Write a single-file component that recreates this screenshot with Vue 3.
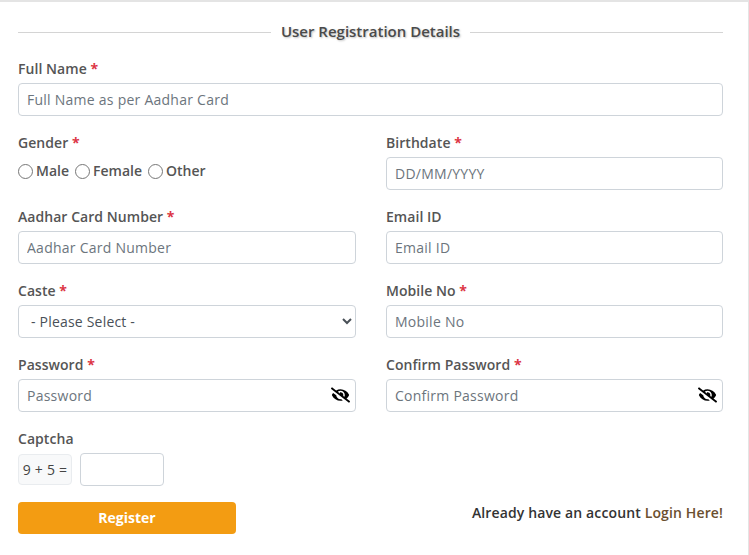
<script setup>
import { ref } from 'vue';

const gender = ref('');
const caste = ref('');
const showPassword = ref(false);
const showConfirm = ref(false);
</script>

<template>
  <div class="page">
    <form class="reg-form" @submit.prevent>
      <div class="legend">
        <span class="legend-line"></span>
        <span class="legend-text">User Registration Details</span>
        <span class="legend-line"></span>
      </div>

      <div class="field">
        <label>Full Name <span class="req">*</span></label>
        <input class="control" type="text" placeholder="Full Name as per Aadhar Card" />
      </div>

      <div class="form-grid">
        <div class="field">
          <label>Gender <span class="req">*</span></label>
          <div class="radio-row">
            <label class="radio"><input v-model="gender" type="radio" value="male" />Male</label>
            <label class="radio"><input v-model="gender" type="radio" value="female" />Female</label>
            <label class="radio"><input v-model="gender" type="radio" value="other" />Other</label>
          </div>
        </div>
        <div class="field">
          <label>Birthdate <span class="req">*</span></label>
          <input class="control" type="text" placeholder="DD/MM/YYYY" />
        </div>

        <div class="field">
          <label>Aadhar Card Number <span class="req">*</span></label>
          <input class="control" type="text" placeholder="Aadhar Card Number" />
        </div>
        <div class="field">
          <label>Email ID</label>
          <input class="control" type="text" placeholder="Email ID" />
        </div>

        <div class="field">
          <label>Caste <span class="req">*</span></label>
          <select v-model="caste" class="control select">
            <option value="">- Please Select -</option>
          </select>
        </div>
        <div class="field">
          <label>Mobile No <span class="req">*</span></label>
          <input class="control" type="text" placeholder="Mobile No" />
        </div>

        <div class="field">
          <label>Password <span class="req">*</span></label>
          <div class="password-wrap">
            <input class="control" :type="showPassword ? 'text' : 'password'" placeholder="Password" />
            <svg class="eye" viewBox="0 0 640 512" @click="showPassword = !showPassword">
              <path d="M320 400c-75.85 0-137.25-58.71-142.9-133.11L72.2 185.82c-13.79 17.3-26.48 35.59-36.72 55.59a32.35 32.35 0 0 0 0 29.19C89.71 376.41 197.07 448 320 448c26.91 0 52.87-4 77.89-10.46L346 397.39a144.13 144.13 0 0 1-26 2.61zm313.82 58.1l-110.55-85.44a331.25 331.25 0 0 0 81.25-102.07 32.35 32.35 0 0 0 0-29.19C550.29 135.59 442.93 64 320 64a308.15 308.15 0 0 0-147.32 37.7L45.46 3.37A16 16 0 0 0 23 6.18L3.37 31.45A16 16 0 0 0 6.18 53.9l588.36 454.73a16 16 0 0 0 22.46-2.81l19.64-25.27a16 16 0 0 0-2.82-22.45zm-183.72-142l-39.3-30.38A94.75 94.75 0 0 0 416 256a94.76 94.76 0 0 0-121.31-92.21A47.65 47.65 0 0 1 304 192a46.64 46.64 0 0 1-1.54 10l-73.61-56.89A142.31 142.31 0 0 1 320 112a143.92 143.92 0 0 1 144 144c0 21.63-5.29 41.79-13.9 60.11z" />
            </svg>
          </div>
        </div>
        <div class="field">
          <label>Confirm Password <span class="req">*</span></label>
          <div class="password-wrap">
            <input class="control" :type="showConfirm ? 'text' : 'password'" placeholder="Confirm Password" />
            <svg class="eye" viewBox="0 0 640 512" @click="showConfirm = !showConfirm">
              <path d="M320 400c-75.85 0-137.25-58.71-142.9-133.11L72.2 185.82c-13.79 17.3-26.48 35.59-36.72 55.59a32.35 32.35 0 0 0 0 29.19C89.71 376.41 197.07 448 320 448c26.91 0 52.87-4 77.89-10.46L346 397.39a144.13 144.13 0 0 1-26 2.61zm313.82 58.1l-110.55-85.44a331.25 331.25 0 0 0 81.25-102.07 32.35 32.35 0 0 0 0-29.19C550.29 135.59 442.93 64 320 64a308.15 308.15 0 0 0-147.32 37.7L45.46 3.37A16 16 0 0 0 23 6.18L3.37 31.45A16 16 0 0 0 6.18 53.9l588.36 454.73a16 16 0 0 0 22.46-2.81l19.64-25.27a16 16 0 0 0-2.82-22.45zm-183.72-142l-39.3-30.38A94.75 94.75 0 0 0 416 256a94.76 94.76 0 0 0-121.31-92.21A47.65 47.65 0 0 1 304 192a46.64 46.64 0 0 1-1.54 10l-73.61-56.89A142.31 142.31 0 0 1 320 112a143.92 143.92 0 0 1 144 144c0 21.63-5.29 41.79-13.9 60.11z" />
            </svg>
          </div>
        </div>
      </div>

      <div class="field captcha-field">
        <label>Captcha</label>
        <div class="captcha-row">
          <span class="captcha-sum">9 + 5 =</span>
          <input class="control captcha-input" type="text" />
        </div>
      </div>

      <div class="form-footer">
        <button class="register-btn" type="submit">Register</button>
        <p class="login-note">Already have an account <a href="#">Login Here!</a></p>
      </div>
    </form>
  </div>
</template>

<style>
html,
body {
  background: #fff;
}
</style>

<style scoped>
.page {
  width: 749px;
  height: 555px;
  box-sizing: border-box;
  overflow: hidden;
  background: #fff;
  border-top: 2px solid #e4e4e4;
  border-right: 1px solid #e4e4e4;
  padding: 0 25px 0 18px;
  font-family: "Open Sans", "Liberation Sans", sans-serif;
  font-size: 14px;
  color: #555;
}

.legend {
  display: flex;
  align-items: center;
  gap: 10px;
  height: 21px;
  margin: 18px 0 17px;
}

.legend-line {
  flex: 1;
  height: 1px;
  margin-top: 3px;
  background: #d4d4d4;
}

.legend-text {
  font-size: 15px;
  font-weight: 600;
  color: #4a4a4a;
  text-shadow: 1px 1px 2px rgba(0, 0, 0, 0.25);
}

.field > label {
  display: block;
  font-weight: 600;
  letter-spacing: 0.05px;
  line-height: 21px;
  margin-bottom: 4px;
}

.req {
  color: #dc3545;
  font-weight: 700;
}

.control {
  display: block;
  width: 100%;
  height: 33px;
  box-sizing: border-box;
  padding: 0 8px;
  border: 1px solid #ced4da;
  border-radius: 4px;
  background: #fff;
  font-family: inherit;
  font-size: 14px;
  color: #495057;
  letter-spacing: 0.25px;
}

.control::placeholder {
  color: #6c757d;
  opacity: 1;
}

.select {
  padding-left: 8px;
  letter-spacing: 0.2px;
}

.form-grid {
  display: grid;
  grid-template-columns: 338px 337px;
  column-gap: 30px;
  row-gap: 16px;
  margin-top: 16px;
}

.radio-row {
  display: flex;
  align-items: center;
  gap: 6px;
  height: 21px;
  margin-top: 7px;
}

.radio {
  display: flex;
  align-items: center;
  gap: 3px;
  font-weight: 600;
}

.radio input {
  width: 15px;
  height: 15px;
  margin: 2px 0 0;
}

.password-wrap {
  position: relative;
}

.eye {
  position: absolute;
  right: 6px;
  top: 8px;
  width: 19px;
  height: 16px;
  fill: #000;
  cursor: pointer;
}

.captcha-field {
  margin-top: 16px;
}

.captcha-row {
  display: flex;
  align-items: center;
  gap: 8px;
}

.captcha-sum {
  box-sizing: border-box;
  width: 54px;
  height: 31px;
  line-height: 29px;
  text-align: center;
  border: 1px solid #e9ecef;
  border-radius: 4px;
  background: #f8f9fa;
  color: #444;
  letter-spacing: 0.2px;
  white-space: nowrap;
}

.captcha-input {
  width: 84px;
}

.form-footer {
  display: flex;
  align-items: flex-start;
  justify-content: space-between;
  margin-top: 16px;
}

.register-btn {
  width: 218px;
  height: 32px;
  padding: 0 0 2px;
  border: none;
  border-radius: 4px;
  background: #f39c12;
  color: #fff;
  font-family: inherit;
  font-size: 14px;
  font-weight: 700;
  cursor: pointer;
}

.login-note {
  margin: 0;
  font-weight: 600;
  line-height: 21px;
  color: #333;
  letter-spacing: 0.13px;
}

.login-note a {
  color: #6b4f2f;
  text-decoration: none;
}
</style>
